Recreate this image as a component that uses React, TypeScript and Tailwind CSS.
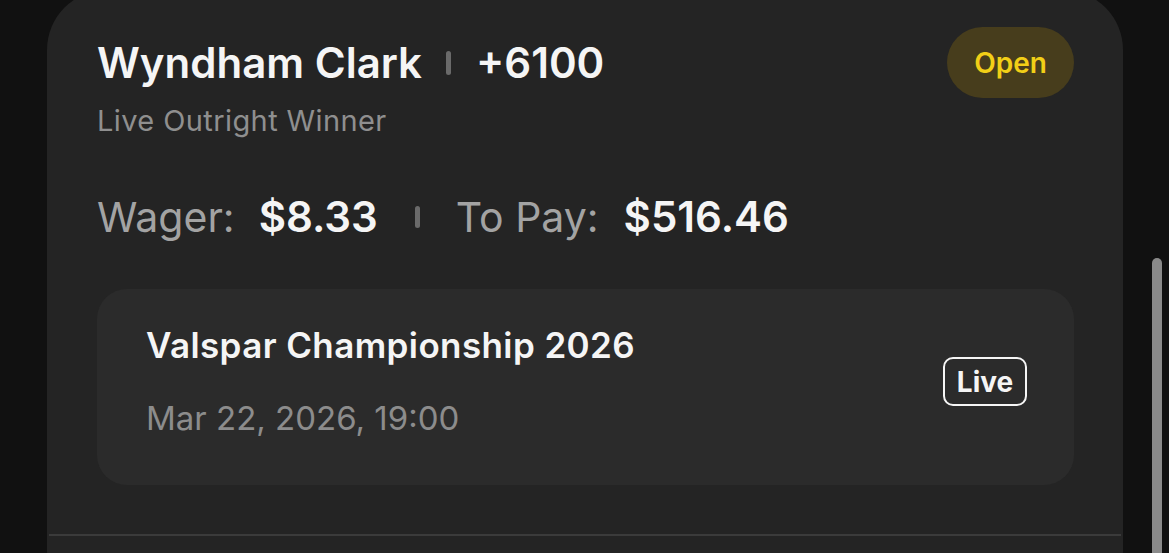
export default function App() {
  return (
    <div
      className="relative w-[1169px] h-[553px] overflow-hidden bg-[#111111]"
      style={{ fontFamily: "Inter, 'Noto Sans', sans-serif" }}
    >
      <div className="ml-[47px] mt-[-10px] w-[1076px] h-[620px] rounded-[60px] bg-[#242424]">
        <div className="pl-[50px] pr-[49px] pt-[37px]">
          <div className="flex items-center justify-between h-[71px]">
            <div className="flex items-center text-[42px] leading-none font-semibold text-[#f5f5f5]">
              <span>Wyndham Clark</span>
              <span className="ml-[24px] mr-[25px] w-[5px] h-[24px] rounded-full bg-[#6a6a6a]" />
              <span>+6100</span>
            </div>
            <div className="flex items-center justify-center w-[127px] h-[71px] rounded-full bg-[#473d1c] text-[28px] font-semibold text-[#f2cf17]">
              Open
            </div>
          </div>
          <div className="mt-[8px] text-[29px] leading-none tracking-[0.4px] text-[#8f8f8f]">
            Live Outright Winner
          </div>

          <div className="mt-[61px] flex items-center text-[41px] leading-none">
            <span className="text-[#a3a3a3]">Wager:</span>
            <span className="ml-[24px] text-[42px] font-semibold text-[#f5f5f5]">$8.33</span>
            <span className="ml-[37px] mr-[36px] w-[5px] h-[22px] rounded-full bg-[#6a6a6a]" />
            <span className="text-[#a3a3a3]">To Pay:</span>
            <span className="ml-[25px] text-[42px] font-semibold text-[#f5f5f5]">$516.46</span>
          </div>

          <div className="mt-[51px] h-[196px] rounded-[30px] bg-[#2b2b2b] flex items-start justify-between pl-[49px] pr-[47px] pt-[39px]">
            <div>
              <div className="text-[35px] leading-none font-semibold tracking-[0.4px] text-[#f5f5f5]">
                Valspar Championship 2026
              </div>
              <div className="mt-[39px] text-[33px] leading-none text-[#8c8c8c]">
                Mar 22, 2026, 19:00
              </div>
            </div>
            <div className="mt-[29px] flex items-center justify-center w-[84px] h-[49px] rounded-[10px] border-2 border-[#f5f5f5] text-[28px] font-bold text-[#f5f5f5]">
              Live
            </div>
          </div>
        </div>
        <div className="mt-[49px] mx-[2px] h-[2px] bg-[#3b3b3b]" />
      </div>
      <div className="absolute left-[1152px] top-[258px] w-[10px] h-[320px] rounded-full bg-[#8a8a8a]" />
    </div>
  );
}
